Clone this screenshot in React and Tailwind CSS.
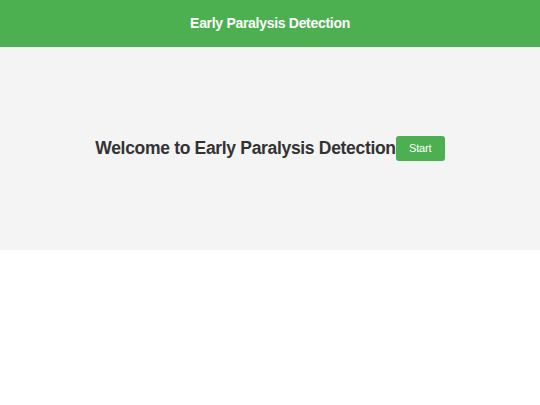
export default function App() {
  return (
    <div className="min-h-[405px] bg-white font-['Liberation_Sans',Arial,sans-serif]">
      <header className="flex h-[47px] items-center justify-center bg-[#4caf50] text-[14px] font-bold tracking-[-0.3px] text-white">
        Early Paralysis Detection
      </header>
      <section className="flex h-[203px] items-center justify-center bg-[#f4f4f4]">
        <h2 className="text-[17.5px] font-bold tracking-[-0.32px] text-[#333]">
          Welcome to Early Paralysis Detection
        </h2>
        <button
          type="button"
          className="flex h-[25px] w-[49px] items-center justify-center rounded-[3px] bg-[#4caf50] text-[11px] tracking-[-0.2px] text-white"
        >
          Start
        </button>
      </section>
    </div>
  );
}
